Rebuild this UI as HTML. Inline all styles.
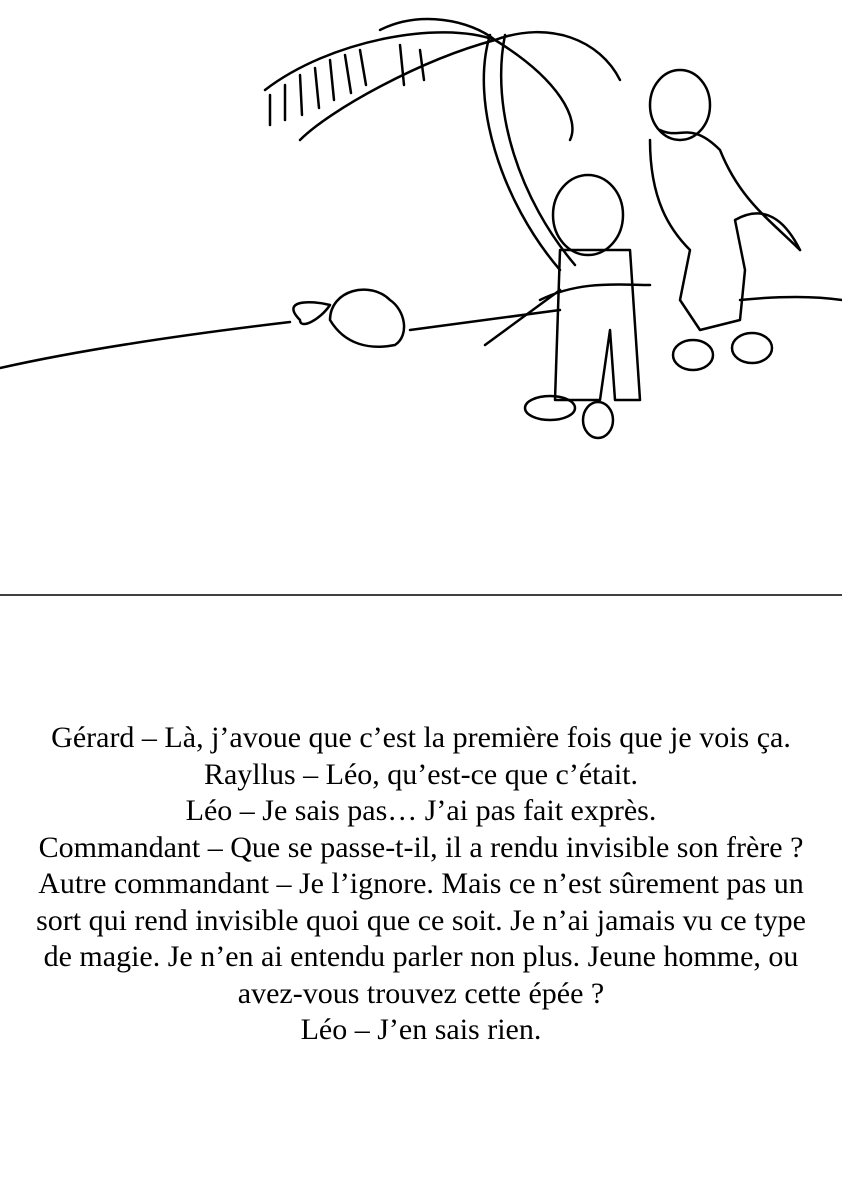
<!DOCTYPE html>
<html><head><meta charset="utf-8"><style>
html,body{margin:0;padding:0;background:#fff;}
body{width:842px;height:1191px;position:relative;overflow:hidden;}
svg{position:absolute;left:0;top:0;}
.t{position:absolute;left:0;width:842px;top:720px;text-align:center;font-family:"Liberation Serif",serif;font-size:30px;line-height:36.5px;color:#000;}
</style></head><body>
<svg width="842" height="600" viewBox="0 0 842 600" fill="none" stroke="#000" stroke-width="2.5" stroke-linecap="round" stroke-linejoin="round">
<path d="M0 368 C80 350 180 335 290 322"/>
<path d="M410 330 C450 325 500 318 560 310"/>
<path d="M740 300 C780 296 815 296 842 300"/>
<path d="M490 35 C470 100 500 200 560 270"/>
<path d="M505 35 C490 110 520 200 575 265"/>
<path d="M495 40 C440 20 330 40 265 90 M495 40 C420 60 330 110 300 140 M495 40 C550 20 600 40 620 80 M495 40 C470 20 420 10 380 30 M495 40 C560 80 580 120 570 140"/>
<path d="M270 95 l0 30 M285 85 l0 35 M300 75 l2 40 M315 68 l4 40 M330 60 l4 40 M345 55 l6 38 M360 50 l6 35 M400 45 l4 40 M420 50 l4 30"/>
<path d="M300 320 C280 300 310 300 330 305 C320 320 300 330 300 320Z"/>
<path d="M330 320 C330 290 370 280 390 300 C405 310 410 335 395 345 C370 350 345 345 330 320Z"/>
<ellipse cx="588" cy="215" rx="35" ry="40"/>
<path d="M560 250 L555 400 L600 400 L610 330 L615 400 L640 400 L630 250Z"/>
<path d="M485 345 L560 290 M540 300 C580 280 620 285 650 285"/>
<ellipse cx="550" cy="408" rx="25" ry="12"/><ellipse cx="598" cy="420" rx="15" ry="18"/>
<ellipse cx="680" cy="105" rx="30" ry="35"/>
<path d="M650 140 C650 200 670 230 690 250 L680 300 L700 330 L740 320 L745 270 L735 220 C770 200 790 230 800 250"/>
<path d="M660 130 C680 140 690 120 720 150 C740 200 770 220 800 250"/>
<ellipse cx="693" cy="355" rx="20" ry="15"/><ellipse cx="752" cy="348" rx="20" ry="15"/>
<path d="M0 595 H842" stroke-width="1.5"/>
</svg>
<div class="t">Gérard – Là, j’avoue que c’est la première fois que je vois ça.<br>Rayllus – Léo, qu’est-ce que c’était.<br>Léo – Je sais pas… J’ai pas fait exprès.<br>Commandant – Que se passe-t-il, il a rendu invisible son frère ?<br>Autre commandant – Je l’ignore. Mais ce n’est sûrement pas un<br>sort qui rend invisible quoi que ce soit. Je n’ai jamais vu ce type<br>de magie. Je n’en ai entendu parler non plus. Jeune homme, ou<br>avez-vous trouvez cette épée ?<br>Léo – J’en sais rien.</div>
</body></html>
